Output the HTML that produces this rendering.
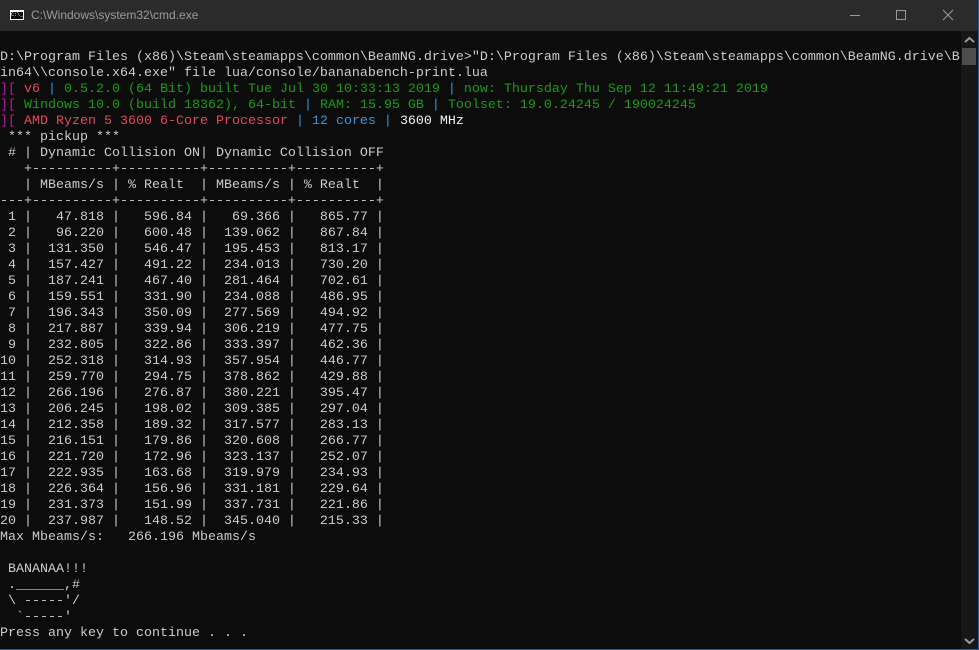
<!DOCTYPE html>
<html><head><meta charset="utf-8"><style>
html,body{margin:0;padding:0;background:#0c0c0c;width:979px;height:650px;overflow:hidden;position:relative}
#title{position:absolute;left:0;top:0;width:979px;height:31px;background:#2b2b2b}
#ttext{position:absolute;left:31px;top:8px;font:12px "Liberation Sans",sans-serif;color:#9a9a9a}
#icon{position:absolute;left:10px;top:10px;width:14px;height:10px;background:#fff;border:0}
#icon span{position:absolute;left:1px;top:2px;width:12px;height:7px;background:#0c0c0c;color:#fff;font:5px "Liberation Mono",monospace;line-height:7px}
pre{position:absolute;left:0;top:50px;margin:0;font-family:"Liberation Mono",monospace;font-size:13.33px;line-height:16px;color:#cccccc;white-space:pre}
.m{color:#c0179e}.r{color:#e74856}.g{color:#13a10e}.b{color:#3a96dd}.w{color:#f2f2f2}
#sb{position:absolute;left:961px;top:31px;width:17px;height:618px;background:#171717}
#thumb{position:absolute;left:962px;top:48px;width:14px;height:17px;background:#4d4d4d}
#rb{position:absolute;left:978px;top:0;width:1px;height:650px;background:#2a5a9a}
#bb{position:absolute;left:0;top:649px;width:979px;height:1px;background:#2a5a9a}
</style></head><body>
<div id="title"><div id="icon"><span>C:\_</span></div><div id="ttext">C:\Windows\system32\cmd.exe</div>
<svg style="position:absolute;left:850px;top:8px" width="120" height="16" viewBox="0 0 120 16"><line x1="0" y1="7.5" x2="10" y2="7.5" stroke="#9a9a9a"/><rect x="46.5" y="2.5" width="9" height="9" fill="none" stroke="#9a9a9a"/><path d="M93 2l10 10M103 2l-10 10" stroke="#9a9a9a"/></svg></div>
<pre>D:\Program Files (x86)\Steam\steamapps\common\BeamNG.drive&gt;"D:\Program Files (x86)\Steam\steamapps\common\BeamNG.drive\B
in64\\console.x64.exe" file lua/console/bananabench-print.lua
<span class="m">][ </span><span class="r">v6</span><span class="b"> | </span><span class="g">0.5.2.0 (64 Bit) built Tue Jul 30 10:33:13 2019</span><span class="b"> | </span><span class="g">now: Thursday Thu Sep 12 11:49:21 2019</span>
<span class="m">][ </span><span class="g">Windows 10.0 (build 18362), 64-bit</span><span class="b"> | </span><span class="g">RAM: 15.95 GB</span><span class="b"> | </span><span class="g">Toolset: 19.0.24245 / 190024245</span>
<span class="m">][ </span><span class="r">AMD Ryzen 5 3600 6-Core Processor</span><span class="b"> | 12 cores | </span><span class="w">3600 MHz</span>
 *** pickup ***
 # | Dynamic Collision ON| Dynamic Collision OFF
   +----------+----------+----------+----------+
   | MBeams/s | % Realt  | MBeams/s | % Realt  |
---+----------+----------+----------+----------+
 1 |   47.818 |   596.84 |   69.366 |   865.77 |
 2 |   96.220 |   600.48 |  139.062 |   867.84 |
 3 |  131.350 |   546.47 |  195.453 |   813.17 |
 4 |  157.427 |   491.22 |  234.013 |   730.20 |
 5 |  187.241 |   467.40 |  281.464 |   702.61 |
 6 |  159.551 |   331.90 |  234.088 |   486.95 |
 7 |  196.343 |   350.09 |  277.569 |   494.92 |
 8 |  217.887 |   339.94 |  306.219 |   477.75 |
 9 |  232.805 |   322.86 |  333.397 |   462.36 |
10 |  252.318 |   314.93 |  357.954 |   446.77 |
11 |  259.770 |   294.75 |  378.862 |   429.88 |
12 |  266.196 |   276.87 |  380.221 |   395.47 |
13 |  206.245 |   198.02 |  309.385 |   297.04 |
14 |  212.358 |   189.32 |  317.577 |   283.13 |
15 |  216.151 |   179.86 |  320.608 |   266.77 |
16 |  221.720 |   172.96 |  323.137 |   252.07 |
17 |  222.935 |   163.68 |  319.979 |   234.93 |
18 |  226.364 |   156.96 |  331.181 |   229.64 |
19 |  231.373 |   151.99 |  337.731 |   221.86 |
20 |  237.987 |   148.52 |  345.040 |   215.33 |
Max Mbeams/s:   266.196 Mbeams/s

 BANANAA!!!
 .______,#
 \ -----'/
  `-----'
Press any key to continue . . .</pre>
<div id="sb"></div><div id="thumb"></div>
<svg style="position:absolute;left:963px;top:36px" width="13" height="8"><path d="M2 6l4.5-4 4.5 4" stroke="#9a9a9a" stroke-width="2" fill="none"/></svg>
<svg style="position:absolute;left:963px;top:637px" width="13" height="8"><path d="M2 2l4.5 4 4.5-4" stroke="#9a9a9a" stroke-width="2" fill="none"/></svg>
<div id="rb"></div><div id="bb"></div>
</body></html>
